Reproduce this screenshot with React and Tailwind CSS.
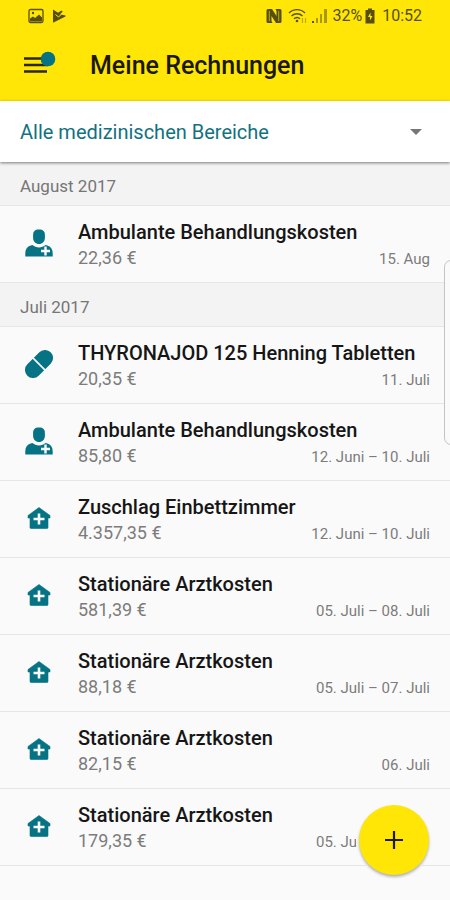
import { useState } from "react";

const GROUPS = [
  {
    title: "August 2017",
    items: [
      { id: 1, kind: "doctor", name: "Ambulante Behandlungskosten", amount: "22,36 €", date: "15. Aug" },
    ],
  },
  {
    title: "Juli 2017",
    items: [
      { id: 2, kind: "pill", name: "THYRONAJOD 125 Henning Tabletten", amount: "20,35 €", date: "11. Juli" },
      { id: 3, kind: "doctor", name: "Ambulante Behandlungskosten", amount: "85,80 €", date: "12. Juni – 10. Juli" },
      { id: 4, kind: "clinic", name: "Zuschlag Einbettzimmer", amount: "4.357,35 €", date: "12. Juni – 10. Juli" },
      { id: 5, kind: "clinic", name: "Stationäre Arztkosten", amount: "581,39 €", date: "05. Juli – 08. Juli" },
      { id: 6, kind: "clinic", name: "Stationäre Arztkosten", amount: "88,18 €", date: "05. Juli – 07. Juli" },
      { id: 7, kind: "clinic", name: "Stationäre Arztkosten", amount: "82,15 €", date: "06. Juli" },
      { id: 8, kind: "clinic", name: "Stationäre Arztkosten", amount: "179,35 €", date: "05. Juli – 06. Juli" },
    ],
  },
];

function DoctorIcon() {
  return (
    <svg width="28" height="28" viewBox="0 0 28 28" fill="#057384" aria-hidden="true">
      <path d="M14 0.5c4.2 0 5.900 1.900 5.900 5.500v3c0 3.400-2.600 6-5.900 6s-5.900-2.600-5.900-6v-3c0-3.600 1.700-5.500 5.900-5.500z" />
      <path d="M0.300 27.500v-3.300c0-4 1.900-6.600 5.400-7.700l1.800-.4c1.700 1.600 4 2.500 6.500 2.500s4.800-.9 6.500-2.500l1.800.4c3.500 1.100 5.400 3.700 5.400 7.700v3.300z" />
      <path d="M20.500 17.500v9M16 22h9" stroke="#fafafa" strokeWidth="2.400" />
    </svg>
  );
}

function PillIcon() {
  return (
    <svg width="28" height="28" viewBox="0 0 28 28" aria-hidden="true">
      <g transform="rotate(-45 14 14)">
        <rect x="-2.500" y="6" width="33" height="16" rx="8" fill="#057384" />
        <path d="M14 5v18" stroke="#fafafa" strokeWidth="1.700" />
      </g>
    </svg>
  );
}

function ClinicIcon() {
  return (
    <svg width="24" height="24" viewBox="0 0 24 24" aria-hidden="true">
      <path
        d="M12 1.500L23 9.500v2.500h-2v9.500a1 1 0 0 1-1 1H4a1 1 0 0 1-1-1V12H1V9.500z"
        fill="#057384"
        stroke="#057384"
        strokeWidth="0.600"
        strokeLinejoin="round"
      />
      <path d="M12 7.500v11M6.500 13h11" stroke="#fafafa" strokeWidth="2.600" />
    </svg>
  );
}

const ICONS = { doctor: DoctorIcon, pill: PillIcon, clinic: ClinicIcon };

function StatusBar() {
  return (
    <div className="flex h-8 items-center justify-between px-7 text-[#574f10]">
      <div className="flex items-center gap-2">
        <svg width="16" height="16" viewBox="0 0 16 16" aria-hidden="true">
          <rect x="1" y="1.500" width="14" height="13" rx="1.500" fill="none" stroke="currentColor" strokeWidth="1.300" />
          <path d="M2 13.500v-3l3-2 2 1.500 4-3.500 3 3v4z" fill="currentColor" />
          <circle cx="5" cy="5" r="1.200" fill="currentColor" />
        </svg>
        <svg width="14" height="16" viewBox="0 0 14 16" aria-hidden="true">
          <path d="M1 1.500l5 3.200L9.500 2.500l1.200 1.200L8 6.200l5.500 1.300v1L1.500 14.500H1z" fill="currentColor" />
          <path d="M3.500 6.500l3 2.500 5-5" fill="none" stroke="#ffe606" strokeWidth="1" />
        </svg>
      </div>
      <div className="flex items-center">
        <svg width="16" height="16" viewBox="0 0 16 16" className="mr-1.5" aria-hidden="true">
          <path
            d="M2 1h4l4.500 7V3L9.500 1H14a1.500 1.500 0 0 1 1.500 1.500v11A1.500 1.500 0 0 1 14 15h-4L5.500 8v5l1 2H2A1.500 1.500 0 0 1 .5 13.500v-11A1.500 1.500 0 0 1 2 1z"
            fill="currentColor"
          />
          <path d="M3.300 3v10M12.700 3v10" stroke="#ffe606" strokeWidth="0.600" />
        </svg>
        <svg width="20" height="16" viewBox="0 0 20 16" fill="none" stroke="currentColor" className="mr-1" aria-hidden="true">
          <path d="M1 5c4.500-4.500 11.500-4.500 16 0M3.500 8c3.200-3 7.800-3 11 0M6 10.800c1.800-1.600 4.200-1.600 6 0" strokeWidth="1.400" />
          <circle cx="9" cy="13" r="1.300" fill="currentColor" stroke="none" />
          <path d="M14.500 10v5M17.500 10v5" strokeWidth="1.200" opacity="0.400" />
        </svg>
        <svg width="16" height="16" viewBox="0 0 16 16" fill="currentColor" className="mr-1" aria-hidden="true">
          <rect x="0" y="13" width="2" height="2" />
          <g opacity="0.500">
            <rect x="4" y="10" width="2" height="5" />
            <rect x="8" y="6" width="2" height="9" />
            <rect x="12" y="1" width="3" height="14" />
          </g>
        </svg>
        <span className="text-base">32%</span>
        <svg width="12" height="16" viewBox="0 0 12 16" className="mr-1.5 ml-0.5" aria-hidden="true">
          <path d="M4 0.500h4v1.500h2.500v13.500h-9V2H4z" fill="currentColor" />
          <path d="M6.500 4.500L4 9h2v3.500L8.500 8h-2z" fill="#ffe606" />
        </svg>
        <span className="text-base">10:52</span>
      </div>
    </div>
  );
}

function BillRow({ item }) {
  const Icon = ICONS[item.kind];
  return (
    <li className="flex h-[77px] items-center border-b border-[#e6e6e6] pr-5">
      <span className="flex w-[78px] shrink-0 justify-center pb-0.5">
        <Icon />
      </span>
      <div className="min-w-0 flex-1">
        <h3 className="text-xl leading-7 font-medium whitespace-nowrap text-[#161616]">{item.name}</h3>
        <div className="flex items-baseline justify-between text-[#7c7c7c]">
          <span className="text-lg leading-6">{item.amount}</span>
          <span className="text-[15px] leading-6">{item.date}</span>
        </div>
      </div>
    </li>
  );
}

export default function App() {
  const [area, setArea] = useState("alle");

  return (
    <div className="relative min-h-screen overflow-hidden bg-[#fafafa] font-['Roboto',sans-serif]">
      <header className="h-[101px] bg-[#ffe606]">
        <StatusBar />
        <div className="flex h-[68px] items-center pl-6">
          <button type="button" aria-label="Menü" className="relative h-8 w-8">
            <svg width="32" height="32" viewBox="0 0 32 32" aria-hidden="true">
              <path d="M0 8.500h24M0 15h24M0 21.500h23" stroke="#2b2800" strokeWidth="2.400" />
              <circle cx="24" cy="9" r="7.300" fill="#057384" />
            </svg>
          </button>
          <h1 className="ml-[34px] text-[25px] font-medium text-[#1a1800]">Meine Rechnungen</h1>
        </div>
      </header>

      <div className="relative flex h-[61px] items-center bg-white shadow-[0_1px_3px_rgba(0,0,0,0.5)]">
        <select
          aria-label="Medizinischer Bereich"
          value={area}
          onChange={(e) => setArea(e.target.value)}
          className="h-full w-full appearance-none bg-transparent px-5 text-xl text-[#12717f] outline-none"
        >
          <option value="alle">Alle medizinischen Bereiche</option>
        </select>
        <svg width="12" height="6" viewBox="0 0 12 6" className="pointer-events-none absolute right-7" aria-hidden="true">
          <path d="M0 0h12L6 6z" fill="#777777" />
        </svg>
      </div>

      <main>
        {GROUPS.map((group) => (
          <section key={group.title}>
            <h2 className="flex h-11 items-center border-b border-[#e6e6e6] bg-[#f3f3f3] px-5 pt-1.5 text-[17px] text-[#767676]">
              {group.title}
            </h2>
            <ul>
              {group.items.map((item) => (
                <BillRow key={item.id} item={item} />
              ))}
            </ul>
          </section>
        ))}
      </main>

      {/* Edge-Panel am rechten Rand */}
      <div className="absolute top-[260px] -right-2 h-[185px] w-[14px] rounded-lg border border-[#c4c4c4] bg-[#fafafa]" />

      <button
        type="button"
        aria-label="Rechnung hinzufügen"
        className="absolute right-[21px] bottom-[25px] flex size-[70px] items-center justify-center rounded-full bg-[#ffe606] shadow-[0_2px_3px_rgba(0,0,0,0.3),0_0_0_3px_#fafafa]"
      >
        <svg width="20" height="20" viewBox="0 0 20 20" aria-hidden="true">
          <path d="M10 1v18M1 10h18" stroke="#1f1c00" strokeWidth="2.200" />
        </svg>
      </button>
    </div>
  );
}
